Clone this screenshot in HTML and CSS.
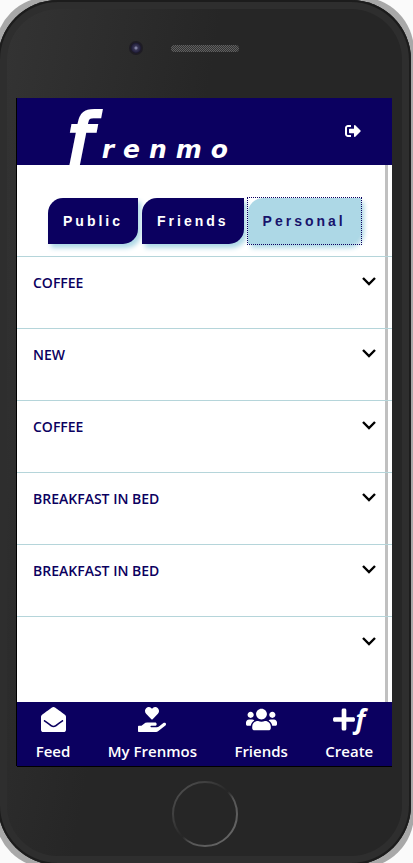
FILE: index.html
```html
<!DOCTYPE html>
<html lang="en">
<head>
<meta charset="utf-8">
<meta name="viewport" content="width=device-width, initial-scale=1">
<title>Frenmo</title>
<link rel="stylesheet" href="styles.css">
</head>
<body>
<div class="phone">
  <div class="bezel">
    <div class="earpiece"><span class="camera"></span><span class="speaker"></span></div>
    <div class="screen">
      <header class="header">
        <h1 class="logo"><span class="logo-f">f</span><span class="logo-rest">renmo</span></h1>
        <button class="logout" type="button" aria-label="Log out">
          <svg width="16" height="16" viewBox="0 0 512 512"><path d="M497 273L329 441c-15 15-41 4.500-41-17v-96H152c-13.300 0-24-10.700-24-24v-96c0-13.300 10.700-24 24-24h136V88c0-21.400 25.900-32 41-17l168 168c9.300 9.400 9.300 24.600 0 34zM192 436v-40c0-6.600-5.400-12-12-12H96c-17.700 0-32-14.300-32-32V160c0-17.700 14.300-32 32-32h84c6.600 0 12-5.400 12-12V76c0-6.600-5.400-12-12-12H96c-53 0-96 43-96 96v192c0 53 43 96 96 96h84c6.600 0 12-5.400 12-12z"/></svg>
        </button>
      </header>
      <main class="content">
        <div class="tabs">
          <span class="tab-wrap"><button class="tab" type="button">Public</button></span>
          <span class="tab-wrap"><button class="tab" type="button">Friends</button></span>
          <span class="tab-wrap focused"><button class="tab active" type="button">Personal</button></span>
        </div>
        <ul class="list">
          <li><button class="row" type="button"><span>COFFEE</span><svg class="chevron" viewBox="0 0 14 10"><path d="M1 2l6 6 6-6"/></svg></button></li>
          <li><button class="row" type="button"><span>NEW</span><svg class="chevron" viewBox="0 0 14 10"><path d="M1 2l6 6 6-6"/></svg></button></li>
          <li><button class="row" type="button"><span>COFFEE</span><svg class="chevron" viewBox="0 0 14 10"><path d="M1 2l6 6 6-6"/></svg></button></li>
          <li><button class="row" type="button"><span>BREAKFAST IN BED</span><svg class="chevron" viewBox="0 0 14 10"><path d="M1 2l6 6 6-6"/></svg></button></li>
          <li><button class="row" type="button"><span>BREAKFAST IN BED</span><svg class="chevron" viewBox="0 0 14 10"><path d="M1 2l6 6 6-6"/></svg></button></li>
          <li><button class="row" type="button" aria-label="Untitled"><span></span><svg class="chevron" viewBox="0 0 14 10"><path d="M1 2l6 6 6-6"/></svg></button></li>
        </ul>
      </main>
      <nav class="nav">
        <a href="#feed"><span class="nav-icon"><svg width="25" height="25" viewBox="0 0 512 512"><path d="M512 464c0 26.510-21.490 48-48 48H48c-26.510 0-48-21.490-48-48V200.724a48 48 0 0 1 18.387-37.776c24.913-19.529 45.501-35.365 164.200-121.511C199.412 29.170 232.797-.347 256 .003c23.198-.354 56.596 29.172 73.413 41.433 118.687 86.137 139.303 101.995 164.200 121.512A48 48 0 0 1 512 200.724V464zm-65.666-196.605c-2.563-3.728-7.700-4.595-11.339-1.907-22.845 16.873-55.462 40.705-105.582 77.079-16.825 12.266-50.210 41.781-73.413 41.430-23.211.344-56.559-29.143-73.413-41.430-50.114-36.370-82.734-60.204-105.582-77.079-3.639-2.688-8.776-1.821-11.339 1.907l-9.072 13.196a7.998 7.998 0 0 0 1.839 10.967c22.887 16.899 55.454 40.690 105.303 76.868 20.274 14.781 56.524 47.813 92.264 47.573 35.724.242 71.961-32.771 92.263-47.573 49.850-36.179 82.418-59.970 105.303-76.868a7.998 7.998 0 0 0 1.839-10.967l-9.071-13.196z"/></svg></span><span>Feed</span></a>
        <a href="#mine"><span class="nav-icon"><svg width="28" height="25" viewBox="0 0 576 512"><path d="M275.300 250.500c7 7.400 18.400 7.400 25.500 0l108.900-114.200c31.600-33.200 29.800-88.200-5.600-118.800-30.800-26.700-76.700-21.900-104.900 7.700L288 36.900l-11.100-11.600C248.700-4.400 202.800-9.200 172 17.500c-35.300 30.600-37.200 85.600-5.600 118.800l108.900 114.200zm290 77.600c-11.800-10.700-30.200-10-42.600 0L430.300 402c-11.300 9.100-25.400 14-40 14H272c-8.800 0-16-7.200-16-16s7.200-16 16-16h78.300c15.900 0 30.700-10.900 33.300-26.600 3.300-20-12.100-37.400-31.600-37.400H192c-27 0-53.100 9.300-74.100 26.300L71.400 384H16c-8.800 0-16 7.200-16 16v96c0 8.800 7.200 16 16 16h356.800c14.500 0 28.600-4.900 40-14L564 377c15.200-12.100 16.400-35.300 1.300-48.900z"/></svg></span><span>My Frenmos</span></a>
        <a href="#friends"><span class="nav-icon"><svg width="31" height="25" viewBox="0 0 640 512"><path d="M96 224c35.300 0 64-28.700 64-64s-28.700-64-64-64-64 28.700-64 64 28.700 64 64 64zm448 0c35.300 0 64-28.700 64-64s-28.700-64-64-64-64 28.700-64 64 28.700 64 64 64zm32 32h-64c-17.600 0-33.500 7.100-45.100 18.600 40.300 22.100 68.900 62 75.100 109.400h66c17.700 0 32-14.300 32-32v-32c0-35.300-28.700-64-64-64zm-256 0c61.900 0 112-50.100 112-112S381.900 32 320 32 208 82.100 208 144s50.100 112 112 112zm76.800 32h-8.300c-20.800 10-43.900 16-68.500 16s-47.600-6-68.500-16h-8.300C179.600 288 128 339.600 128 403.200V432c0 26.500 21.500 48 48 48h288c26.500 0 48-21.500 48-48v-28.800c0-63.600-51.600-115.200-115.200-115.200zm-223.700-13.400C161.500 263.100 145.600 256 128 256H64c-35.300 0-64 28.700-64 64v32c0 17.700 14.300 32 32 32h65.900c6.300-47.400 34.900-87.300 75.200-109.400z"/></svg></span><span>Friends</span></a>
        <a href="#create"><span class="nav-icon"><svg width="22" height="25" viewBox="0 0 448 512"><path d="M416 208H272V64c0-17.670-14.330-32-32-32h-32c-17.670 0-32 14.330-32 32v144H32c-17.670 0-32 14.330-32 32v32c0 17.670 14.330 32 32 32h144v144c0 17.670 14.330 32 32 32h32c17.670 0 32-14.330 32-32V304h144c17.670 0 32-14.330 32-32v-32c0-17.670-14.330-32-32-32z"/></svg><span class="small-f">f</span></span><span>Create</span></a>
      </nav>
    </div>
    <div class="chin">
      <svg class="home" viewBox="0 0 68 68">
        <defs><linearGradient id="ring" x1="0" y1="0" x2="1" y2="1">
          <stop offset="0" stop-color="#555"/><stop offset=".3" stop-color="#3c3c3c"/><stop offset=".5" stop-color="#262626"/><stop offset=".6" stop-color="#555"/><stop offset="1" stop-color="#6c6c6c"/>
        </linearGradient></defs>
        <circle cx="34" cy="34" r="32" fill="none" stroke="url(#ring)" stroke-width="2"/>
      </svg>
    </div>
  </div>
</div>
</body>
</html>
```
FILE: styles.css
```css
* { box-sizing: border-box; }

html { background: #fafafa; overflow: hidden; }

body {
  margin: 0;
  font-family: "Open Sans", "Noto Sans", sans-serif;
}

button { font: inherit; border: 0; background: none; cursor: pointer; }

.phone {
  margin: -3px -1px 0 -5px;
  padding: 3px;
  border-radius: 54px;
  background: #a8a8a8;
}

.bezel {
  padding: 0 19px;
  border-radius: 60px;
  background: linear-gradient(100deg, #343434, #262626 40%);
  box-shadow: inset 0 0 0 2px #1c1c1c, inset 0 0 0 9px #2e2e2e;
}

.earpiece {
  display: grid;
  grid-template-columns: 1fr 68px 1fr;
  align-items: center;
  height: 98px;
  padding-bottom: 2px;
}

.camera {
  justify-self: end;
  width: 14px;
  height: 14px;
  margin-right: 28px;
  border: 2px solid #1e1c24;
  border-radius: 50%;
  background: radial-gradient(circle, #8080a0 0 1px, #3a3856 2px, #1d1a36 5px);
}

.speaker {
  height: 7px;
  border-radius: 4px;
  background: repeating-conic-gradient(#333 0 25%, #606060 0 50%) 0 0 / 2px 2px;
}

.screen { background: #fff; box-shadow: -1px 0 #000, 0 1px #000; }

.header {
  display: flex;
  justify-content: space-between;
  align-items: center;
  height: 67px;
  padding: 0 31px 0 50px;
  background: #0b0060;
  color: #fff;
}

.logo {
  display: flex;
  align-self: flex-end;
  align-items: flex-end;
  gap: 10px;
  margin: 0;
  font-family: "DejaVu Sans", sans-serif;
  font-style: italic;
}

.logo-f {
  font-size: 70px;
  font-weight: 400;
  line-height: 50px;
  -webkit-text-stroke: 4px #fff;
}

.logo-rest {
  font-size: 25px;
  font-weight: 700;
  line-height: 31px;
  letter-spacing: 9px;
}

.logout { display: flex; padding: 0 0 2px; }

svg { fill: #fff; }

.content {
  min-height: 537px;
  padding-top: 33px;
  background: linear-gradient(#c0c0c0, #c0c0c0) right 4px top 0 / 3px 100% no-repeat #fff;
}

.tabs {
  display: flex;
  gap: 4px;
  padding: 0 30px 12px 31px;
}

.tab-wrap { display: flex; }
.focused { outline: 1px dotted #0b0060; }

.tab {
  height: 46px;
  padding: 0 15px;
  border-radius: 15px 0;
  background: #0b0060;
  box-shadow: 3px 4px 5px #add8e6;
  color: #fff;
  font: bold 14px "Liberation Sans", Arial, sans-serif;
  letter-spacing: 3px;
}

.active { background: #add8e6; color: #18146c; }

.list { margin: 0; padding: 0; list-style: none; }
.list li { border-top: 1px solid #b5d5da; }

.row {
  display: flex;
  justify-content: space-between;
  align-items: flex-start;
  width: 100%;
  height: 71px;
  padding: 16px;
  color: #0b0060;
  font-size: 14px;
  font-weight: 600;
  line-height: 20px;
}

.chevron {
  width: 14px;
  height: 10px;
  margin-top: 3px;
  fill: none;
  stroke: #000;
  stroke-width: 2.4;
}

.nav {
  display: flex;
  justify-content: space-around;
  height: 64px;
  padding-top: 3px;
  background: #0b0060;
}

.nav a {
  display: flex;
  flex-direction: column;
  align-items: center;
  gap: 7px;
  color: #fff;
  font-size: 15px;
  font-weight: 600;
  line-height: 22px;
  text-decoration: none;
}

.nav-icon { display: flex; align-items: center; height: 28px; }

.small-f {
  font: italic 700 26px/28px "Open Sans", sans-serif;
}

.chin {
  display: flex;
  justify-content: center;
  height: 99px;
  padding-top: 14px;
}

.home { width: 68px; height: 68px; }
```
